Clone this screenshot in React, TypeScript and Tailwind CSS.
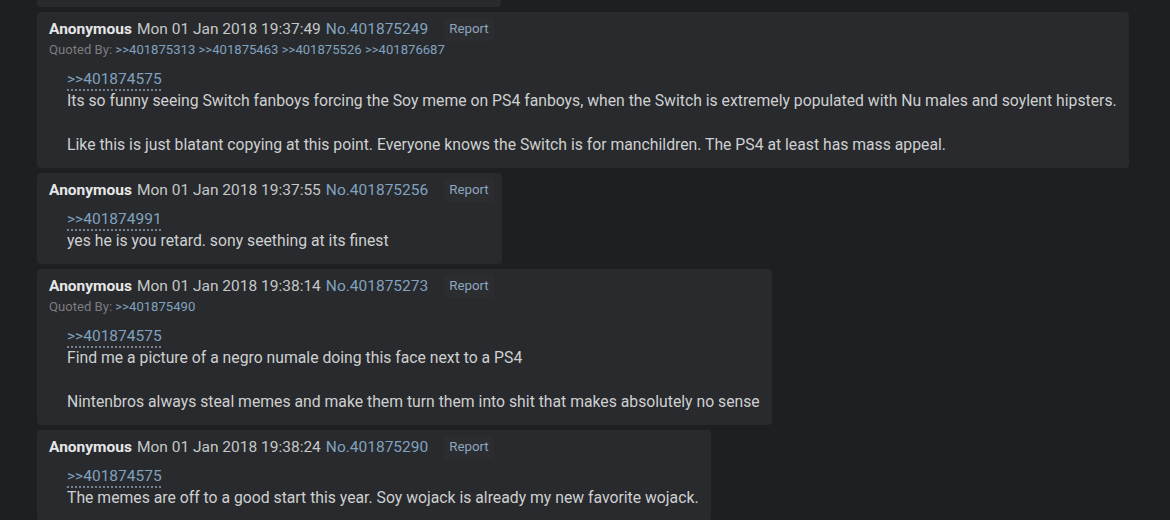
import React from "react"

type Post = {
  time: string
  no: string
  quotedBy?: string[]
  quote: string
  body: string[]
}

const POSTS: Post[] = [
  {
    time: "Mon 01 Jan 2018 19:37:49",
    no: "401875249",
    quotedBy: ["401875313", "401875463", "401875526", "401876687"],
    quote: "401874575",
    body: [
      "Its so funny seeing Switch fanboys forcing the Soy meme on PS4 fanboys, when the Switch is extremely populated with Nu males and soylent hipsters.",
      "",
      "Like this is just blatant copying at this point. Everyone knows the Switch is for manchildren. The PS4 at least has mass appeal.",
    ],
  },
  {
    time: "Mon 01 Jan 2018 19:37:55",
    no: "401875256",
    quote: "401874991",
    body: ["yes he is you retard. sony seething at its finest"],
  },
  {
    time: "Mon 01 Jan 2018 19:38:14",
    no: "401875273",
    quotedBy: ["401875490"],
    quote: "401874575",
    body: [
      "Find me a picture of a negro numale doing this face next to a PS4",
      "",
      "Nintenbros always steal memes and make them turn them into shit that makes absolutely no sense",
    ],
  },
  {
    time: "Mon 01 Jan 2018 19:38:24",
    no: "401875290",
    quote: "401874575",
    body: ["The memes are off to a good start this year. Soy wojack is already my new favorite wojack."],
  },
]

function Reply({ post }: { post: Post }) {
  return (
    <div className="flex w-fit flex-col rounded-[4px] bg-[#282a2e] pl-3 pr-3 pt-[7px] pb-3">
      {/* header */}
      <div className="flex h-[20px] items-center text-[15.5px] leading-[20px]">
        <span className="font-bold text-[#e6e6e6]">Anonymous</span>
        <span className="ml-[5px] text-[#c5c8c6]">{post.time}</span>
        <span className="ml-[5px] text-[#81a2be]">No.{post.no}</span>
        <span className="-mr-1 ml-4 flex h-[23px] items-center rounded-[2px] bg-[#2b2d31] px-[5px] text-[13.3px] text-[#8fa6bd]">
          Report
        </span>
      </div>
      {post.quotedBy && (
        <div className="mt-[3px] mb-[3px] whitespace-nowrap text-[13.1px] leading-[15px] text-[#7b7d80]">
          Quoted By:{" "}
          {post.quotedBy.map((q, i) => (
            <span key={q} className="text-[#81a2be]">
              {i > 0 ? " " : ""}&gt;&gt;{q}
            </span>
          ))}
        </div>
      )}
      {/* blockquote */}
      <div className="ml-[18px] mt-2 text-[15.75px] leading-[22px] text-[#cfd0d0]">
        <div>
          <span className="text-[15.5px] text-[#81a2be] underline decoration-dotted decoration-[#8a9bad] underline-offset-[6px]">
            &gt;&gt;{post.quote}
          </span>
        </div>
        {post.body.map((line, i) => (
          <div key={i} className="whitespace-nowrap">
            {line === "" ? <br /> : line}
          </div>
        ))}
      </div>
    </div>
  )
}

export default function App() {
  return (
    <div
      className="flex h-[520px] w-[1170px] flex-col gap-[5px] overflow-hidden bg-[#1d1f21] pl-[37px]"
      style={{ fontFamily: "Roboto, 'Noto Sans', sans-serif" }}
    >
      {/* tail end of the previous reply */}
      <div className="h-[7px] w-[464px] shrink-0 rounded-b-[4px] bg-[#282a2e]" />
      {POSTS.map((p) => (
        <div key={p.no} className="shrink-0">
          <Reply post={p} />
        </div>
      ))}
    </div>
  )
}
